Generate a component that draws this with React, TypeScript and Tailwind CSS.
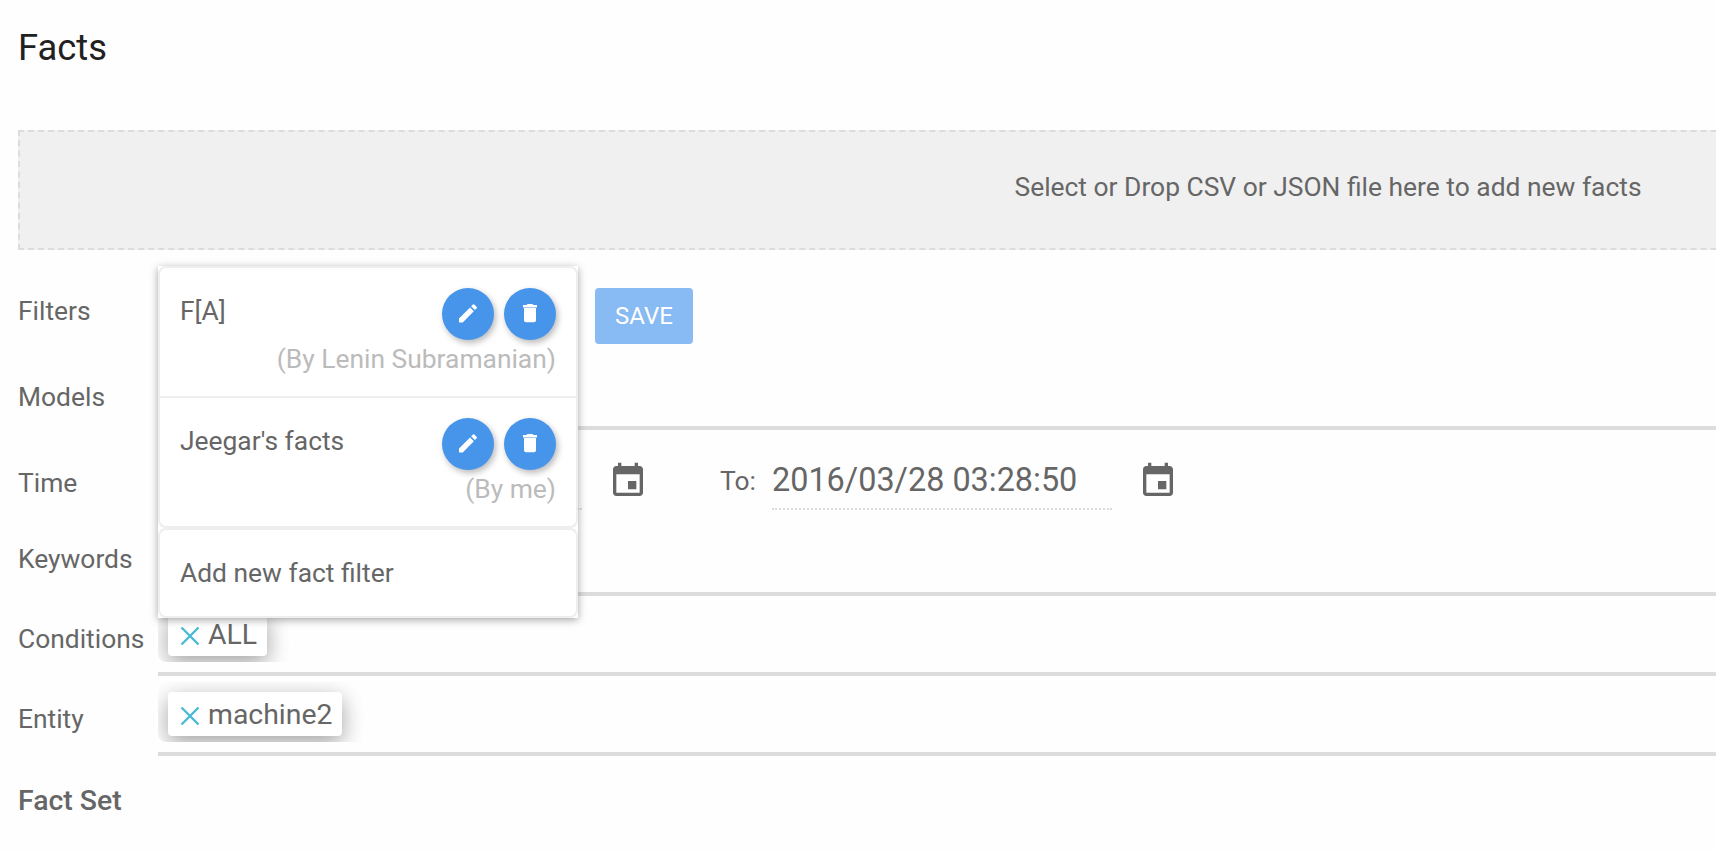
import type { ReactNode } from "react";

function EventIcon() {
  return (
    <svg viewBox="0 0 24 24" className="block size-10 fill-[#666]">
      <path d="M17 12h-5v5h5v-5zM16 1v2H8V1H6v2H5c-1.11 0-1.99.9-1.99 2L3 19c0 1.1.89 2 2 2h14c1.1 0 2-.9 2-2V5c0-1.1-.9-2-2-2h-1V1h-2zm3 18H5V8h14v11z" />
    </svg>
  );
}

function RoundButton({ label, children }: { label: string; children: ReactNode }) {
  return (
    <button
      aria-label={label}
      className="flex size-[52px] items-center justify-center rounded-full bg-[#4794eb] pb-0.5 shadow-[2px_3px_6px_rgba(0,0,0,0.28)]"
    >
      <svg viewBox="0 0 24 24" className="block size-6 fill-white">
        {children}
      </svg>
    </button>
  );
}

function FilterItem({ name, owner }: { name: string; owner: string }) {
  return (
    <div className="flex h-[130px] flex-col px-5 pt-5">
      <div className="flex h-[50px] justify-between">
        <span className="pt-2 leading-[30px]">{name}</span>
        <div className="flex gap-2.5">
          <RoundButton label="Edit">
            <path d="M3 17.5V21.500h3.75L17.81 10.190l-3.75-3.75L3 17.5zM20.71 7.290a1 1 0 0 0 0-1.41l-2.34-2.34a1 1 0 0 0-1.41 0l-1.83 1.83 3.75 3.75 1.83-1.83z" />
          </RoundButton>
          <RoundButton label="Delete">
            <path d="M6 19.300c0 1.100.900 2 2 2h8c1.100 0 2-.900 2-2V7H6v12.300z" />
            <path d="M5 6h14v1H5z" fillOpacity="0.5" />
            <path d="M19 4h-3.500l-1-1h-5l-1 1H5v2h14V4z" />
          </RoundButton>
        </div>
      </div>
      <span className="mt-1.5 text-right leading-[30px] text-[#bbb]">{owner}</span>
    </div>
  );
}

function Row({ name, box, pad, children }: { name: string; box: string; pad: string; children?: ReactNode }) {
  return (
    <div className={`flex pl-[18px] ${box}`}>
      <div className={`w-[140px] shrink-0 leading-[30px] ${pad}`}>{name}</div>
      {children}
    </div>
  );
}

function Chip({ text }: { text: string }) {
  return (
    <div className="flex-1 border-b-4 border-[#dcdcdc] pt-1.5">
      <div className="h-[60px] overflow-hidden rounded-lg px-2.5 pt-2.5">
        <div className="flex h-11 w-fit items-center rounded bg-white pr-2.5 pl-3 text-[28.4px] shadow-[0_10px_22px_rgba(0,0,0,0.2),0_4px_22px_rgba(0,0,0,0.19)]">
          <svg viewBox="0 0 20 20" className="mt-1 mr-2 block size-5 stroke-[#4bb8d6] stroke-[2.4]">
            <path d="M1.500 1.500l17 17M18.500 1.500l-17 17" />
          </svg>
          <span className="pt-0.5 leading-8">{text}</span>
        </div>
      </div>
    </div>
  );
}

export default function App() {
  return (
    <main className="h-[852px] w-[1716px] overflow-hidden bg-[#fefefe] font-['Roboto',sans-serif] text-[26.4px] text-[#666]">
      <h1 className="h-[130px] pt-[27px] pl-[18px] text-[36.4px] leading-[42px] text-[#212121]">Facts</h1>
      <div className="ml-[18px] flex h-[120px] w-[2620px] justify-center border-2 border-dashed border-[#dcdcdc] bg-[#f0f0f0] pt-10">
        <span className="leading-[30px]">Select or Drop CSV or JSON file here to add new facts</span>
      </div>

      <Row name="Filters" box="h-[100px]" pad="pt-[46px]">
        <div className="relative w-[420px]">
          <div className="absolute top-4 left-0 z-10 w-[420px] bg-white shadow-[0_2px_8px_rgba(0,0,0,0.35)]">
            <div className="h-[262px] divide-y-2 divide-[#eee] rounded-lg border-2 border-[#eee]">
              <FilterItem name="F[A]" owner="(By Lenin Subramanian)" />
              <FilterItem name="Jeegar's facts" owner="(By me)" />
            </div>
            <div className="h-[90px] rounded-lg border-2 border-[#eee] px-5 pt-7">
              <span className="block leading-[30px]">Add new fact filter</span>
            </div>
          </div>
        </div>
        <button className="mt-[38px] ml-[17px] flex h-14 w-[98px] items-center justify-center rounded bg-[#88baf3] text-[24px] text-white">
          SAVE
        </button>
      </Row>

      <Row name="Models" box="h-20" pad="pt-8">
        <div className="flex-1 border-b-4 border-[#dcdcdc]" />
      </Row>

      <Row name="Time" box="h-[86px]" pad="pt-[38px]">
        <div className="flex h-20">
          <div className="w-[424px] border-b-2 border-dotted border-[#dcdcdc]" />
          <div className="ml-[26px] pt-[31px]">
            <EventIcon />
          </div>
          <span className="ml-[72px] w-[52px] pt-9 leading-[30px]">To:</span>
          <div className="w-[340px] border-b-2 border-dotted border-[#dcdcdc] pt-[31px] text-[32.4px] leading-[38px]">
            2016/03/28 03:28:50
          </div>
          <div className="ml-[26px] pt-[31px]">
            <EventIcon />
          </div>
        </div>
      </Row>

      <Row name="Keywords" box="h-20" pad="pt-7">
        <div className="flex-1 border-b-4 border-[#dcdcdc]" />
      </Row>
      <Row name="Conditions" box="h-20" pad="pt-7">
        <Chip text="ALL" />
      </Row>
      <Row name="Entity" box="h-20" pad="pt-7">
        <Chip text="machine2" />
      </Row>

      <h2 className="pt-[30px] pl-[18px] text-[28.4px] leading-[30px] font-medium">Fact Set</h2>
    </main>
  );
}
